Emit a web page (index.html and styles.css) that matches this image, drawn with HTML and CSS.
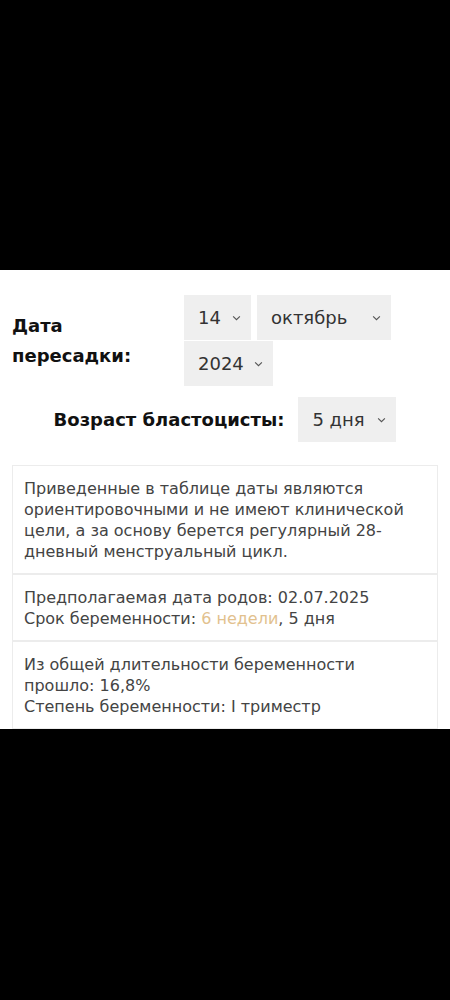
FILE: index.html
```html
<!DOCTYPE html>
<html lang="ru">
<head>
    <meta charset="UTF-8">
    <meta name="viewport" content="width=device-width, initial-scale=1.0">
    <title>Калькулятор срока беременности после ЭКО</title>
    <link rel="stylesheet" href="styles.css">
</head>
<body>
    <div class="top-bar"></div>

    <div id="calculator">
        <div class="date-row">
            <div class="field-label date-label">Дата пересадки:</div>
            <div class="selects">
                <div class="select select-day">
                    <span class="value">14</span>
                    <svg class="chevron" viewBox="0 0 8 5"><path d="M1 1l3 3 3-3"/></svg>
                </div>
                <div class="select select-month">
                    <span class="value">октябрь</span>
                    <svg class="chevron" viewBox="0 0 8 5"><path d="M1 1l3 3 3-3"/></svg>
                </div>
                <div class="select select-year">
                    <span class="value">2024</span>
                    <svg class="chevron" viewBox="0 0 8 5"><path d="M1 1l3 3 3-3"/></svg>
                </div>
            </div>
        </div>

        <div class="age-row">
            <div class="field-label">Возраст бластоцисты:</div>
            <div class="select select-age">
                <span class="value">5 дня</span>
                <svg class="chevron" viewBox="0 0 8 5"><path d="M1 1l3 3 3-3"/></svg>
            </div>
        </div>

        <table id="result">
            <tr>
                <td>Приведенные в таблице даты являются ориентировочными и не имеют клинической цели, а за основу берется регулярный 28-дневный менструальный цикл.</td>
            </tr>
            <tr>
                <td>
                    Предполагаемая дата родов: 02.07.2025<br>
                    Срок беременности: <span class="weeks">6 недели</span>, 5 дня
                </td>
            </tr>
            <tr>
                <td>
                    Из общей длительности беременности прошло: 16,8%<br>
                    Степень беременности: I триместр
                </td>
            </tr>
        </table>
    </div>
</body>
</html>
```

FILE: styles.css
```css
body {
    margin: 0;
    background-color: #000;
    font-family: "DejaVu Sans", "Open Sans", sans-serif;
}

.top-bar {
    height: 270px;
}

#calculator {
    height: 459px;
    overflow: hidden;
    background-color: #fff;
    padding: 25px 12px 0;
    box-sizing: border-box;
}

.date-row {
    display: flex;
    align-items: center;
}

.date-label {
    width: 172px;
    flex-shrink: 0;
    padding-right: 30px;
    box-sizing: border-box;
}

.field-label {
    font-size: 18px;
    font-weight: bold;
    line-height: 30px;
    color: #111;
}

.selects {
    display: flex;
    flex-wrap: wrap;
    gap: 1px 6px;
    width: 220px;
}

.select {
    display: flex;
    align-items: center;
    justify-content: space-between;
    height: 45px;
    padding: 0 10px 0 14px;
    box-sizing: border-box;
    background-color: #efefef;
    color: #333;
    font-size: 18px;
}

.select-day { width: 67px; }
.select-month { width: 134px; }
.select-year { width: 89px; }
.select-age { width: 98px; }

.chevron {
    width: 9px;
    height: 6px;
    fill: none;
    stroke: #555;
    stroke-width: 1;
}

.age-row {
    display: flex;
    justify-content: center;
    align-items: center;
    gap: 14px;
    margin-top: 11px;
}

#result {
    width: 100%;
    margin-top: 23px;
    border-collapse: collapse;
    border: 1px solid #ececec;
}

#result td {
    padding: 12px 11px 11px;
    border-bottom: 2px solid #ececec;
    font-size: 16px;
    line-height: 21px;
    color: #444;
}

.weeks {
    color: #e2c18e;
}
```
